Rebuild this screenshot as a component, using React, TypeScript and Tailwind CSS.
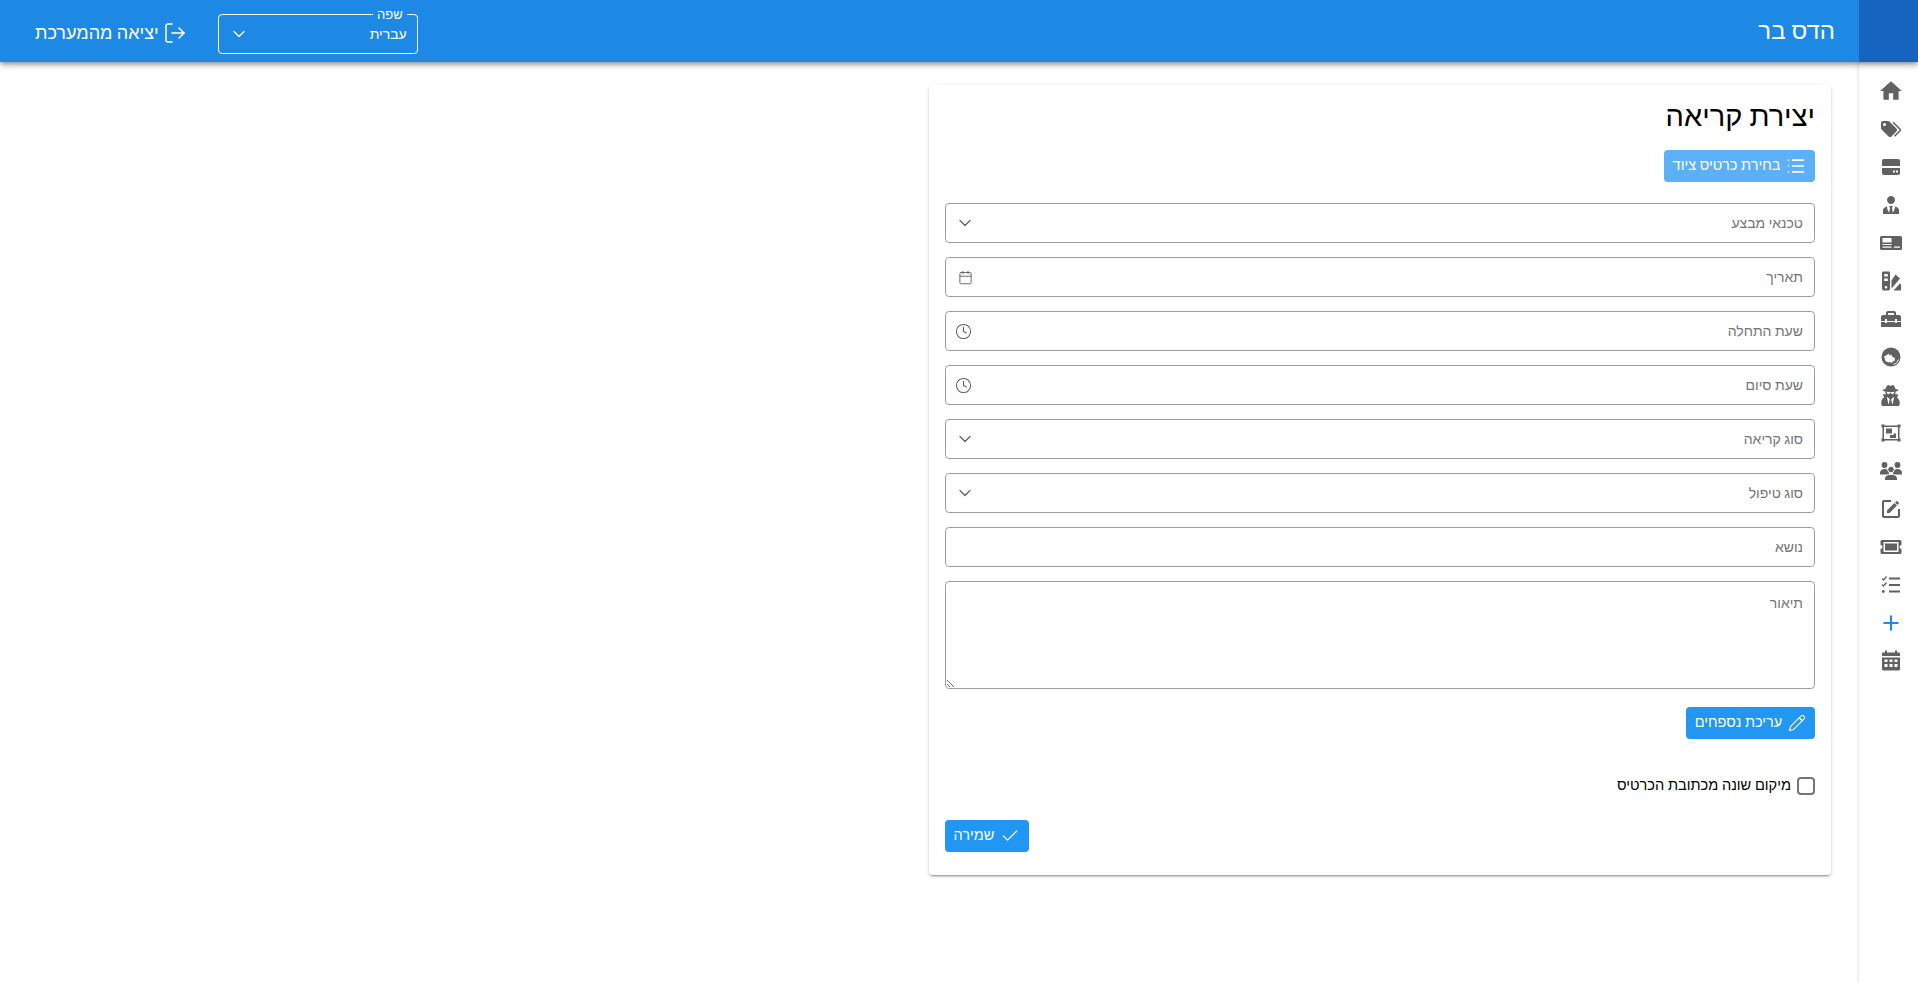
import React from "react";
import { ChevronDown, Clock, Calendar, Check, Pencil, List, LogOut } from "lucide-react";
import { FaUserSecret } from "react-icons/fa";
import { MdHome, MdAdd } from "react-icons/md";

const P = ({ d }: { d: string }) => (
  <svg viewBox="0 0 24 24" className="w-6 h-6" fill="currentColor" fillRule="evenodd"><path d={d} /></svg>
);

const Server = () => (
  <svg viewBox="0 0 24 24" className="w-6 h-6" fill="currentColor">
    <path fillRule="evenodd" d="M5 4h14a2 2 0 0 1 2 2v5H3V6a2 2 0 0 1 2-2zM3 13h18v5a2 2 0 0 1-2 2H5a2 2 0 0 1-2-2zM14 15.500v2h2v-2zM17 15.500v2h2v-2z" />
  </svg>
);
const CardIcon = () => (
  <svg viewBox="0 0 24 24" className="w-6 h-6" fill="currentColor">
    <path fillRule="evenodd" d="M2.500 5h19A1.500 1.500 0 0 1 23 6.500v11a1.500 1.500 0 0 1-1.500 1.500h-19A1.500 1.500 0 0 1 1 17.500v-11A1.500 1.500 0 0 1 2.500 5zM3.500 7v4.500h9V7zM3.500 13v1h9v-1zM15 15.500v1.200h6v-1.200zM3.500 15.500v1.200h9v-1.200z" />
  </svg>
);
const Swatch = () => (
  <svg viewBox="0 0 24 24" className="w-6 h-6" fill="currentColor">
    <path fillRule="evenodd" d="M4 2.500h6a1 1 0 0 1 1 1V20a2 2 0 0 1-2 1.500H5A2 2 0 0 1 3 20V3.500a1 1 0 0 1 1-1zM5.200 5v2.500h3.600V5zM5.200 9.500V12h3.600V9.500zM7 17a1.300 1.300 0 1 0 0 2.600A1.300 1.300 0 0 0 7 17z" />
    <path d="M12.500 11.500 16.500 5.500 21 9.500 12.500 19.500zM14.500 21.500l6-6.500h1.500v6.500z" />
  </svg>
);
const Frame = () => (
  <svg viewBox="0 0 24 24" className="w-6 h-6" fill="currentColor">
    <path fillRule="evenodd" d="M2.500 3.500h3v1h13v-1h3v3h-1v11h1v3h-3v-1h-13v1h-3v-3h1v-11h-1zM5 6v12h14V6z" />
    <path d="M7 7.500h6v5H7zM14.500 12.500H17V17h-6v-3h3.500z" />
  </svg>
);
const Ticket = () => (
  <svg viewBox="0 0 24 24" className="w-6 h-6" fill="currentColor">
    <path fillRule="evenodd" d="M3 5h18a1.500 1.500 0 0 1 1.500 1.500V10a2 2 0 0 0 0 4v3.500A1.500 1.500 0 0 1 21 19H3a1.500 1.500 0 0 1-1.500-1.500V14a2 2 0 0 0 0-4V6.500A1.500 1.500 0 0 1 3 5zM5 7a.5.500 0 0 0-.500.500v9a.5.500 0 0 0 .500.500h14a.5.500 0 0 0 .500-.500v-9A.5.500 0 0 0 19 7z" />
    <rect x="6" y="8.500" width="12" height="7" />
  </svg>
);
const Checks = () => (
  <svg viewBox="0 0 24 24" className="w-6 h-6" fill="none" stroke="currentColor">
    <path strokeWidth="1.300" d="M3 5.500l1.500 1.500 3-3.500M3 11.500l1.500 1.500 3-3.500" />
    <circle cx="4.300" cy="18.500" r="1.400" fill="currentColor" stroke="none" />
    <path strokeWidth="2" d="M10 5.500h11M10 12h11M10 18.500h11" />
  </svg>
);
const Cal = () => (
  <svg viewBox="0 0 24 24" className="w-6 h-6" fill="currentColor">
    <path fillRule="evenodd" d="M6 1.500h2v2h8v-2h2v2h2a1 1 0 0 1 1 1V7H3V4.500a1 1 0 0 1 1-1h2zM3 8.500h18V20a1.500 1.500 0 0 1-1.500 1.500h-15A1.500 1.500 0 0 1 3 20zM5.500 10.500V13h3v-2.500zM10.500 10.500V13h3v-2.500zM15.500 10.500V13h3v-2.500zM5.500 15V18h3v-3zM10.500 15V18h3v-3zM15.500 15V18h3v-3z" />
  </svg>
);
const Globe = () => (
  <svg viewBox="0 0 24 24" className="w-6 h-6">
    <circle cx="12" cy="12" r="9.500" fill="currentColor" />
    <path fill="#fff" d="M5 11.500l3-1.500 1.500-1.500 1 2 2-1 .5 2 3 1.500-.5 3-2 .5-.5 1.500-2.500-1-1 .5-3-1.500z" />
    <path fill="none" stroke="#fff" strokeWidth="1" d="M14.500 19.500c2.500-.8 4.200-2.500 5-5" />
  </svg>
);
const Groups = () => (
  <svg viewBox="0 0 24 24" className="w-6 h-6" fill="currentColor">
    <circle cx="5.500" cy="6" r="2.900" />
    <circle cx="18.500" cy="6" r="2.900" />
    <path d="M1 15.500v-1.500c0-2.800 2.200-4 4.500-4s4.500 1.200 4.500 4v1.500zM14 15.500v-1.500c0-2.800 2.200-4 4.500-4s4.500 1.200 4.500 4v1.500z" />
    <circle cx="12" cy="10.500" r="3.300" stroke="#fff" strokeWidth="1" />
    <path stroke="#fff" strokeWidth="1" d="M5.500 21.500v-1.500c0-3.200 3.400-4.700 6.500-4.700s6.500 1.500 6.500 4.700v1.500z" />
  </svg>
);

const icons: React.ReactNode[] = [
  <MdHome className="w-[26px] h-[26px]" />,
  <P d="M5.500 9A1.500 1.500 0 0 0 7 7.500 1.500 1.500 0 0 0 5.500 6 1.500 1.500 0 0 0 4 7.500 1.500 1.500 0 0 0 5.500 9M17.410 11.580C17.770 11.940 18 12.440 18 13C18 13.550 17.780 14.050 17.410 14.410L12.410 19.410C12.050 19.770 11.550 20 11 20C10.450 20 9.950 19.780 9.580 19.410L2.590 12.420C2.220 12.050 2 11.550 2 11V6C2 4.890 2.890 4 4 4H9C9.550 4 10.050 4.220 10.410 4.580L17.410 11.580M13.540 5.710L14.540 4.710L21.410 11.580C21.780 11.940 22 12.450 22 13C22 13.550 21.780 14.050 21.420 14.410L16.040 19.790L15.040 18.790L20.750 13L13.540 5.710Z" />,
  <Server />,
  <P d="M12 3C14.210 3 16 4.790 16 7S14.210 11 12 11 8 9.210 8 7 9.790 3 12 3M16 13.540C16 14.600 15.720 17.070 13.810 19.830L13 15L13.940 13.120C13.320 13.050 12.670 13 12 13S10.680 13.050 10.060 13.120L11 15L10.190 19.830C8.280 17.070 8 14.600 8 13.540C5.610 14.240 4 15.500 4 17V21H20V17C20 15.500 18.400 14.240 16 13.540Z" />,
  <CardIcon />,
  <Swatch />,
  <P d="M18 16H16V15H8V16H6V15H2V20H22V15H18V16M20 8H17V6C17 4.900 16.100 4 15 4H9C7.900 4 7 4.900 7 6V8H4C2.900 8 2 8.900 2 10V14H6V12H8V14H16V12H18V14H22V10C22 8.900 21.100 8 20 8M15 8H9V6H15V8Z" />,
  <Globe />,
  <FaUserSecret className="w-[19px] h-[21px]" />,
  <Frame />,
  <Groups />,
  <P d="M5 3C3.890 3 3 3.890 3 5V19A2 2 0 0 0 5 21H19A2 2 0 0 0 21 19V12H19V19H5V5H12V3H5M17.780 4C17.610 4 17.430 4.070 17.300 4.200L16.080 5.410L18.580 7.910L19.800 6.700C20.060 6.440 20.060 6 19.800 5.750L18.250 4.200C18.120 4.070 17.950 4 17.780 4M15.370 6.120L8 13.500V16H10.500L17.870 8.620L15.370 6.120Z" />,
  <Ticket />,
  <Checks />,
  <MdAdd className="w-[26px] h-[26px] text-[#1e88e5]" />,
  <Cal />,
];

const Field = ({ label, icon }: { label: string; icon?: React.ReactNode }) => (
  <div className="h-10 rounded border border-[#9e9e9e] flex items-center justify-between pr-[11px] pl-[9px] text-sm text-[#757575]">
    <span>{label}</span>
    <span className="w-5 h-5 flex items-center justify-center text-[#616161]">{icon}</span>
  </div>
);

const chev = <ChevronDown size={20} strokeWidth={1.5} />;
const clock = <Clock size={17} strokeWidth={1.5} className="-ml-1" />;

export default function App() {
  return (
    <div dir="rtl" className="h-[983px] overflow-hidden flex flex-col bg-white font-['Roboto','Liberation_Sans',sans-serif]">
      <header className="h-[62px] shrink-0 flex items-center bg-[#1e88e5] text-white shadow-[0_2px_4px_-1px_rgba(0,0,0,0.3),0_4px_5px_rgba(0,0,0,0.16),0_1px_10px_rgba(0,0,0,0.12)] relative z-10">
        <div className="w-[59px] h-full bg-[#1565c0]" />
        <div className="mr-6 text-2xl">הדס בר</div>
        <div className="mr-auto flex items-center">
          <fieldset className="w-[200px] h-[46px] -mt-px border border-white rounded px-2.5 flex flex-col">
            <legend className="text-[13px] leading-none px-1">שפה</legend>
            <div className="flex items-center justify-between h-full pb-1.5">
              <span className="text-sm leading-none">עברית</span>
              <ChevronDown size={20} strokeWidth={1.5} />
            </div>
          </fieldset>
          <div className="flex items-center gap-1 text-lg mt-[3px] mr-[31px] ml-[35px]">
            <LogOut size={24} strokeWidth={1.5} />
            <span>יציאה מהמערכת</span>
          </div>
        </div>
      </header>
      <div className="flex flex-1 min-h-0">
        <nav className="w-[60px] shrink-0 border-l border-[#eeeeee] flex flex-col items-center pt-[10px] pl-1 text-[#616161] shadow-[0_0_4px_rgba(0,0,0,0.08)]">
          {icons.map((ic, i) => (
            <div key={i} className="h-[38px] w-full flex items-center justify-center">{ic}</div>
          ))}
        </nav>
        <main className="flex-1 pt-[23px] pr-[27px]">
          <section className="w-[902px] h-[790px] rounded bg-white shadow-[0_3px_1px_-2px_rgba(0,0,0,0.2),0_2px_2px_rgba(0,0,0,0.14),0_1px_5px_rgba(0,0,0,0.12)] px-[16px] pt-[11px] flex flex-col items-stretch">
            <h1 className="text-[29px] leading-10 text-black">יצירת קריאה</h1>
            <div className="flex mt-[14px]">
              <button className="h-8 w-[151px] rounded bg-[#5cb0f8] text-white text-[14.5px] font-medium flex items-center justify-center gap-1.5">
                <List size={20} strokeWidth={2} />
                בחירת כרטיס ציוד
              </button>
            </div>
            <div className="flex flex-col gap-3.5 mt-[21px]">
              <Field label="טכנאי מבצע" icon={chev} />
              <Field label="תאריך" icon={<Calendar size={15} strokeWidth={1.5} />} />
              <Field label="שעת התחלה" icon={clock} />
              <Field label="שעת סיום" icon={clock} />
              <Field label="סוג קריאה" icon={chev} />
              <Field label="סוג טיפול" icon={chev} />
              <Field label="נושא" />
              <textarea
                placeholder="תיאור"
                className="h-[108px] block rounded border border-[#9e9e9e] px-[11px] py-[11px] text-sm placeholder:text-[#757575] resize-y outline-none"
              />
            </div>
            <div className="flex mt-[18px]">
              <button className="h-8 w-[129px] rounded bg-[#2196f3] text-white text-[14.5px] font-medium flex items-center justify-center gap-1.5">
                <Pencil size={18} strokeWidth={1.5} />
                עריכת נספחים
              </button>
            </div>
            <div className="flex items-center gap-1.5 mt-[36px] text-[14.6px] text-black">
              <span className="w-[18px] h-[18px] rounded-sm border-2 border-[#757575]" />
              מיקום שונה מכתובת הכרטיס
            </div>
            <div className="flex justify-end mt-[23px]">
              <button className="h-8 w-[84px] rounded bg-[#2196f3] text-white text-[14.5px] font-medium flex items-center justify-center gap-1.5">
                <Check size={20} strokeWidth={1.5} />
                שמירה
              </button>
            </div>
          </section>
        </main>
      </div>
    </div>
  );
}
